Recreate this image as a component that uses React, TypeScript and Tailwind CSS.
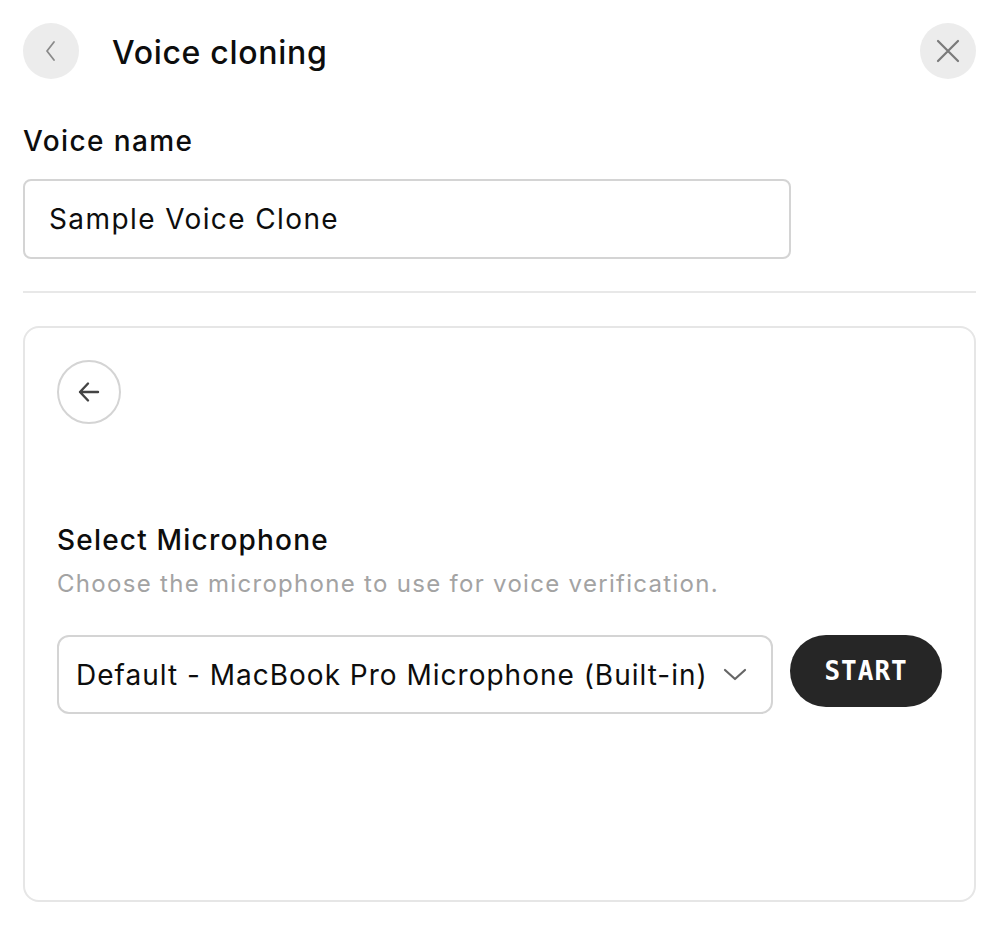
import React from "react";

export default function App() {
  return (
    <div
      className="w-[999px] h-[927px] bg-white px-[23px] pt-[23px] text-[#0d0d0d]"
      style={{ fontFamily: "Inter, 'Noto Sans', sans-serif" }}
    >
      <div className="flex items-center h-[56px]">
        <button className="w-[56px] h-[56px] rounded-full bg-[#ececec] flex items-center justify-center">
          <svg width="24" height="24" viewBox="0 0 24 24" fill="none" stroke="#8a8a8a" strokeWidth="1.8" strokeLinecap="round" strokeLinejoin="round">
            <path d="M15 3 L8 12 L15 21" />
          </svg>
        </button>
        <div className="ml-[33px] mt-[4px] text-[32px] font-medium tracking-[0.7px] leading-[40px]">Voice cloning</div>
        <div className="flex-1" />
        <button className="w-[56px] h-[56px] rounded-full bg-[#ececec] flex items-center justify-center">
          <svg width="24" height="24" viewBox="0 0 24 24" fill="none" stroke="#7a7a7a" strokeWidth="2.2" strokeLinecap="round">
            <path d="M2 2 L22 22 M22 2 L2 22" />
          </svg>
        </button>
      </div>

      <div className="mt-[44px] text-[28px] font-medium leading-[36px] tracking-[1.4px]">Voice name</div>
      <div className="mt-[20px] w-[768px] h-[80px] border-2 border-[#d4d4d4] rounded-[8px] flex items-center px-[24px] text-[28px] tracking-[1.4px]">
        Sample Voice Clone
      </div>

      <div className="mt-[32px] h-[2px] bg-[#e8e8e8]" />

      <div className="mt-[33px] h-[576px] border-2 border-[#e6e6e6] rounded-[16px] px-[32px] pt-[32px]">
        <button className="w-[64px] h-[64px] rounded-full border-2 border-[#d4d4d4] flex items-center justify-center">
          <svg width="26" height="26" viewBox="0 0 26 26" fill="none" stroke="#444" strokeWidth="2.4" strokeLinecap="round" strokeLinejoin="round">
            <path d="M22 13 H4 M12 4.5 L4 13 L12 21.5" />
          </svg>
        </button>

        <div className="mt-[98px] text-[28px] font-medium leading-[36px] tracking-[1.2px]">Select Microphone</div>
        <div className="mt-[10px] text-[24px] text-[#a3a3a3] leading-[32px] tracking-[1.3px]">
          Choose the microphone to use for voice verification.
        </div>

        <div className="mt-[35px] flex items-start gap-[17px]">
          <div className="w-[717px] h-[79px] border-2 border-[#d4d4d4] rounded-[12px] flex items-center pl-[17px] pr-[24px] text-[28px] tracking-[1px]">
            <span className="flex-1">Default - MacBook Pro Microphone (Built-in)</span>
            <svg width="24" height="14" viewBox="0 0 24 14" fill="none" stroke="#666" strokeWidth="2.2" strokeLinecap="round" strokeLinejoin="round">
              <path d="M2 2 L12 11 L22 2" />
            </svg>
          </div>
          <button
            className="w-[152px] h-[72px] rounded-full bg-[#262626] text-white text-[26px] font-bold tracking-[1px]"
            style={{ fontFamily: "'DejaVu Sans Mono', monospace" }}
          >
            START
          </button>
        </div>
      </div>
    </div>
  );
}
